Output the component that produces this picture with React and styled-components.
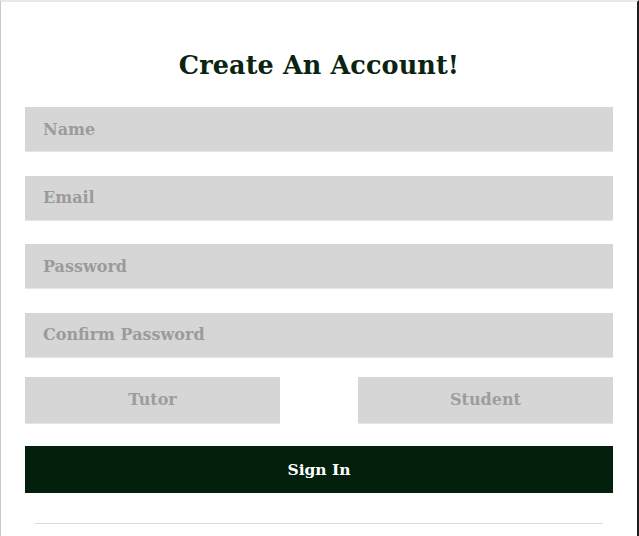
import React from "react";
import styled, { createGlobalStyle } from "styled-components";

const GlobalStyle = createGlobalStyle`
  html, body {
    margin: 0;
    padding: 0;
    background: #ffffff;
  }
`;

const Page = styled.div`
  box-sizing: border-box;
  width: 639px;
  height: 536px;
  overflow: hidden;
  border-top: 2px solid #e9e9e9;
  border-left: 1px solid #c9c9c9;
  border-right: 2px solid #1d1d1d;
  background: #ffffff;
  font-family: "DejaVu Serif", "Liberation Serif", serif;
`;

const Card = styled.div`
  display: flex;
  flex-direction: column;
  padding: 0 24px;
`;

const Title = styled.h1`
  margin: 41px 0 0 0;
  height: 64px;
  line-height: 44px;
  text-align: center;
  font-size: 25.5px;
  font-weight: 700;
  color: #0b2410;
  letter-spacing: 0.1px;
`;

const Fields = styled.div`
  display: flex;
  flex-direction: column;
  gap: 23.5px;
`;

const Input = styled.input`
  box-sizing: border-box;
  width: 100%;
  height: 45px;
  border: none;
  border-bottom: 1px solid #e6e6e6;
  background: #d6d6d6;
  padding: 0 18px;
  font-family: "DejaVu Serif", "Liberation Serif", serif;
  font-size: 16px;
  font-weight: 700;
  color: #555;
  outline: none;

  &::placeholder {
    color: #9b9b9b;
  }
`;

const RoleRow = styled.div`
  display: flex;
  justify-content: space-between;
  margin-top: 19px;
`;

const RoleButton = styled.button`
  width: 255px;
  height: 47px;
  border: none;
  border-bottom: 1px solid #e6e6e6;
  background: #d6d6d6;
  color: #9d9d9d;
  font-family: "DejaVu Serif", "Liberation Serif", serif;
  font-size: 16px;
  font-weight: 700;
  cursor: pointer;
`;

const SubmitButton = styled.button`
  margin-top: 22px;
  height: 47px;
  border: none;
  background: #02200b;
  color: #ffffff;
  font-family: "DejaVu Serif", "Liberation Serif", serif;
  font-size: 15.5px;
  font-weight: 700;
  cursor: pointer;
`;

const Divider = styled.hr`
  margin: 30px 10px 0 10px;
  border: none;
  border-top: 1px solid #dcdcdc;
`;

export default function App() {
  return (
    <>
      <GlobalStyle />
      <Page>
        <Card>
          <Title>Create An Account!</Title>
          <Fields>
            <Input placeholder="Name" />
            <Input placeholder="Email" />
            <Input type="password" placeholder="Password" />
            <Input type="password" placeholder="Confirm Password" />
          </Fields>
          <RoleRow>
            <RoleButton>Tutor</RoleButton>
            <RoleButton>Student</RoleButton>
          </RoleRow>
          <SubmitButton>Sign In</SubmitButton>
          <Divider />
        </Card>
      </Page>
    </>
  );
}
